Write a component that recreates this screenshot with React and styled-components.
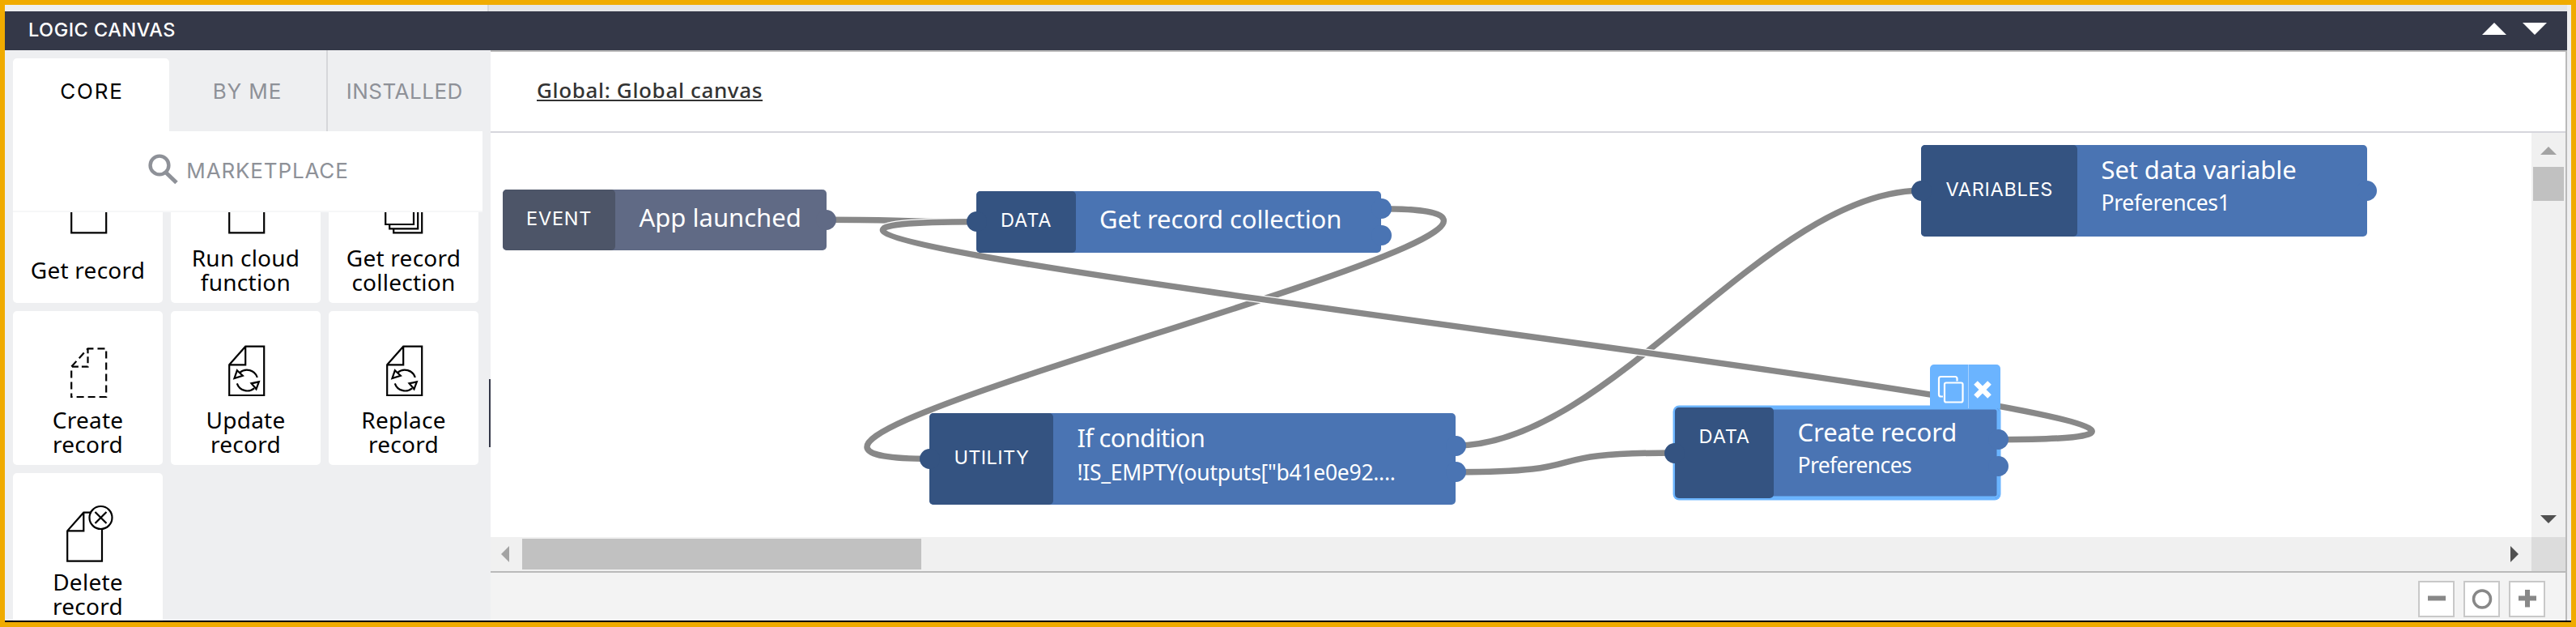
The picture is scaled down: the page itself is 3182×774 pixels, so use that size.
import React from 'react';
import styled, { createGlobalStyle, css } from 'styled-components';

const GlobalStyle = createGlobalStyle`
  *, *::before, *::after { box-sizing: border-box; }
  body { margin: 0; font-family: 'Noto Sans', sans-serif; }
`;

const capsFont = "Inter, 'Noto Sans', sans-serif";

const Frame = styled.div`
  display: flex;
  flex-direction: column;
  width: 3182px;
  height: 774px;
  border: 6px solid #f0ab00;
  background: #efeff0;
  overflow: hidden;
`;

const TopStrip = styled.div`
  display: flex;
  flex: none;
  height: 8px;
  width: 3165px;
  background: #eeeff1;
`;

const TopStripMain = styled.div`
  flex: 1;
  margin-left: 596px;
  border-left: 2px solid #d6d7d9;
  background: #e4e5e7;
`;

const PanelHeader = styled.header`
  display: flex;
  flex: none;
  align-items: center;
  justify-content: space-between;
  width: 3165px;
  height: 48px;
  padding: 0 25px 3px 29px;
  background: #343848;
`;

const PanelTitle = styled.h1`
  margin: 0;
  color: #fff;
  font-family: ${capsFont};
  font-size: 23.5px;
  font-weight: 500;
  letter-spacing: 0.5px;
`;

const HeaderArrows = styled.div`
  display: flex;
  gap: 20px;
  padding-bottom: 2px;

  svg { display: block; fill: #fff; }
`;

const Workspace = styled.main`
  display: flex;
  width: 3165px;
  height: 704px;
  flex: none;
`;

const BottomRule = styled.div`
  flex: none;
  height: 2px;
  background: #000;
`;

const Sidebar = styled.aside`
  display: flex;
  flex-direction: column;
  position: relative;
  width: 600px;
  height: 704px;
  padding-left: 10px;
  background: #eeeff1;
`;

const ResizeHandle = styled.div`
  position: absolute;
  top: 406px;
  right: 0;
  width: 2px;
  height: 84px;
  background: #343848;
`;

const Tabs = styled.nav`
  display: flex;
  flex: none;
  height: 100px;
`;

const Tab = styled.div`
  display: flex;
  align-items: center;
  justify-content: center;
  width: ${(p) => p.$width}px;
  padding-top: 1px;
  padding-right: 2px;
  padding-left: ${(p) => p.$track}px;
  color: #8e9198;
  font-family: ${capsFont};
  font-size: 26px;
  letter-spacing: ${(p) => p.$track}px;
  border-left: ${(p) => (p.$divided ? '2px solid #d6d7da' : '0')};
  ${(p) =>
    p.$active &&
    css`
      height: 90px;
      margin-top: 10px;
      padding-top: 0;
      padding-right: 0;
      padding-bottom: 9px;
      border-radius: 5px 5px 0 0;
      background: #fff;
      color: #000;
    `}
`;

const SearchBar = styled.div`
  display: flex;
  flex: none;
  align-items: center;
  justify-content: center;
  gap: 10px;
  width: 580px;
  height: 100px;
  padding-bottom: 1px;
  padding-left: 2px;
  border-bottom: 2px solid #f6f7f8;
  background: #fff;
  color: #8e9198;
  font-family: ${capsFont};
  font-size: 26px;
  letter-spacing: 0.85px;

  svg { margin-top: -3px; }
`;

const BlockList = styled.div`
  height: 504px;
  overflow: hidden;
`;

const BlockGrid = styled.div`
  display: grid;
  grid-template-columns: repeat(3, 185px);
  grid-auto-rows: 190px;
  gap: 10px;
  margin-top: -78px;
`;

const BlockCard = styled.div`
  display: flex;
  flex-direction: column;
  align-items: center;
  padding-top: 35px;
  border-radius: 5px;
  background: #fff;

  svg { flex: none; fill: none; stroke: #000; stroke-width: 2.2; }
`;

const BlockLabel = styled.div`
  display: flex;
  align-items: center;
  justify-content: center;
  height: 60px;
  margin-top: 4px;
  color: #000;
  font-size: 28px;
  line-height: 30px;
  letter-spacing: 0.25px;
  text-align: center;
  white-space: pre-line;
`;

const Editor = styled.section`
  display: flex;
  flex-direction: column;
  width: 2565px;
  height: 704px;
  border-top: 2px solid #bababa;
  border-right: 2px solid #bababa;
  background: #fff;
`;

const EditorTitleBar = styled.div`
  display: flex;
  flex: none;
  align-items: center;
  height: 100px;
  padding: 0 0 3px 57px;
  border-bottom: 2px solid #d6d6dc;
`;

const CanvasLink = styled.span`
  color: #333;
  border-bottom: 2px solid #333;
  font-size: 26px;
  font-weight: 500;
  line-height: 24px;
  letter-spacing: ${(p) => p.$track}px;
`;

const ScrollGrid = styled.div`
  display: grid;
  flex: none;
  grid-template-columns: 2521px 42px;
  grid-template-rows: 499px 42px;
  border-bottom: 2px solid #bababa;
`;

const Canvas = styled.div`
  position: relative;
  overflow: hidden;
  background: #fff;
`;

const Wires = styled.svg`
  position: absolute;
  inset: 0;
  fill: none;
`;

const Track = styled.div`
  display: flex;
  flex-direction: ${(p) => (p.$vertical ? 'column' : 'row')};
  align-items: center;
  justify-content: space-between;
  padding: ${(p) => (p.$vertical ? '17px 0' : '0 16px 0 13px')};
  background: #f0f0f0;

  svg { display: block; flex: none; }
`;

const Thumb = styled.div`
  width: ${(p) => p.$w}px;
  height: ${(p) => p.$h}px;
  margin: ${(p) => p.$m};
  background: #c1c1c1;
`;

const ScrollCorner = styled.div`
  background: #dcdcdc;
`;

const EditorFooter = styled.footer`
  display: flex;
  flex: 1;
  align-items: flex-start;
  justify-content: flex-end;
  gap: 11px;
  padding: 10px 25px 0 0;
  background: #f3f3f3;
`;

const ZoomButton = styled.button`
  display: flex;
  align-items: center;
  justify-content: center;
  width: 45px;
  height: 45px;
  padding: 0;
  border: 2px solid #c8c8c8;
  background: #fff;

  svg { fill: none; stroke: #888; }
`;

const NodeBox = styled.div`
  position: absolute;
  left: ${(p) => p.$x}px;
  top: ${(p) => p.$y}px;
  display: flex;
  width: ${(p) => p.$w}px;
  height: ${(p) => p.$h}px;
  border-radius: 5px;
  background: ${(p) => p.$tone.body};
  color: #fff;
  box-shadow: ${(p) => (p.$selected ? '0 0 0 2.5px #6bb4ff, inset 0 0 0 2.5px #6bb4ff' : 'none')};
`;

const NodeCategory = styled.div`
  display: flex;
  flex: none;
  align-items: ${(p) => (p.$selected ? 'flex-start' : 'center')};
  justify-content: center;
  width: ${(p) => p.$w}px;
  padding: ${(p) => (p.$selected ? '20px' : 0)} 0 ${(p) => (p.$selected ? 0 : '3px')} ${(p) => p.$track}px;
  border-radius: 5px;
  background: ${(p) => p.$tone.head};
  font-family: ${capsFont};
  font-size: 23.5px;
  line-height: 32px;
  letter-spacing: ${(p) => p.$track}px;
`;

const NodeBody = styled.div`
  display: flex;
  flex-direction: column;
  justify-content: ${(p) => (p.$single ? 'center' : 'flex-start')};
  padding: ${(p) => (p.$single ? '0 0 7px 29.5px' : '10px 0 0 29.5px')};
  white-space: nowrap;
`;

const NodeTitle = styled.div`
  font-size: 31px;
  line-height: 40px;
  letter-spacing: ${(p) => p.$track}px;
`;

const NodeDetail = styled.div`
  padding-top: ${(p) => p.$drop || 1}px;
  font-size: 26.5px;
  line-height: 40px;
  letter-spacing: ${(p) => p.$track}px;
`;

const Port = styled.span`
  position: absolute;
  top: ${(p) => p.$y - 12.5}px;
  ${(p) => p.$side}: -12.5px;
  width: 25px;
  height: 25px;
  border-radius: 50%;
  background: ${(p) => (p.$side === 'left' ? p.$tone.head : p.$tone.body)};
`;

const NodeActions = styled.div`
  position: absolute;
  top: -53px;
  right: -2.5px;
  display: flex;
  width: 87px;
  height: 54px;
  border-radius: 5px 5px 0 0;
  background: #6bb4ff;
`;

const NodeAction = styled.span`
  display: flex;
  align-items: center;
  justify-content: center;
  width: ${(p) => p.$w}px;
  padding: ${(p) => p.$pad};
  border-left: ${(p) => (p.$divided ? '1px solid #a8d2ff' : '0')};

  svg { flex: none; fill: none; stroke: #fff; }
`;

const Triangle = ({ dir, w, h, color }) => {
  const points = {
    up: `0,${h} ${w / 2},0 ${w},${h}`,
    down: `0,0 ${w},0 ${w / 2},${h}`,
    left: `${w},0 0,${h / 2} ${w},${h}`,
    right: `0,0 ${w},${h / 2} 0,${h}`,
  }[dir];
  return (
    <svg width={w} height={h}>
      <polygon points={points} fill={color} />
    </svg>
  );
};

const SearchIcon = () => (
  <svg width="37" height="38" viewBox="0 0 37 38" fill="none" stroke="#8e9198">
    <circle cx="14" cy="14" r="11.4" strokeWidth="4.4" />
    <path d="M22.5 23.5 L35 35.5" strokeWidth="5" />
  </svg>
);

const icons = {
  record: <path d="M11.2 30.6 L31.2 8 H54.2 V68.3 H11.2 Z M11.2 30.6 H31.2 V8" />,
  collection: (
    <>
      <path d="M9.2 30 L25 12 H44 V58 H9.2 Z" />
      <path d="M14.2 59 V63.3 H49.2 V17" />
      <path d="M19.2 64 V68.3 H54.2 V22" />
    </>
  ),
  create: (
    <>
      <path strokeDasharray="9 5" d="M11.2 71 V33.7 L31.5 11.3 H54.2 V71 Z" strokeDashoffset="4.5" />
      <path strokeDasharray="8 4" d="M31.5 11.3 V33.7 H11.2" strokeDashoffset="2" />
    </>
  ),
  update: (
    <>
      <path d="M11.2 31.3 L31.2 8.7 H54.2 V69 H11.2 Z M11.2 31.3 H31.2 V8.7" />
      <path d="M45.8 47 A13.3 13.3 0 0 0 24.2 41" />
      <path d="M20.8 54.3 A13.3 13.3 0 0 0 42 60.3" />
      <path d="M20.8 38.3 L17.5 48 L27.8 44.7 Z M47.8 52.3 L44.5 61.3 L38.5 54.3 Z" />
    </>
  ),
  remove: (
    <>
      <path d="M36 13.7 H26.3 L6.2 36.3 V73.7 H49 V34 M6.2 36.3 H26.3 V13.7" />
      <circle cx="47.5" cy="20" r="14" />
      <path d="M40.5 13 L54.5 27 M54.5 13 L40.5 27" />
    </>
  ),
};

const BlockIcon = ({ name }) => (
  <svg width="64" height="80" viewBox="0 0 64 80">{icons[name]}</svg>
);

const blocks = [
  ['record', 'Get record'],
  ['record', 'Run cloud\nfunction'],
  ['collection', 'Get record\ncollection'],
  ['create', 'Create\nrecord'],
  ['update', 'Update\nrecord'],
  ['update', 'Replace\nrecord'],
  ['remove', 'Delete\nrecord'],
];

const slate = { head: '#4d5568', body: '#606a85' };
const blue = { head: '#345381', body: '#4a74b3' };

const nodes = [
  { id: 'event', x: 14.5, y: 70, w: 400, h: 75, tone: slate, headW: 139.5, category: 'EVENT', track: 0.8, title: 'App launched', titleTrack: 0, outs: [37.3] },
  { id: 'collection', x: 600, y: 72, w: 500, h: 75.7, tone: blue, headW: 122.5, category: 'DATA', track: 0.9, title: 'Get record collection', titleTrack: -0.08, ins: 37.7, outs: [21.7, 54] },
  { id: 'condition', x: 542.4, y: 346, w: 650, h: 113, tone: blue, headW: 152.6, category: 'UTILITY', track: 0.4, title: 'If condition', titleTrack: -0.7, detail: '!IS_EMPTY(outputs["b41e0e92....', detailTrack: -0.28, detailDrop: 2.5, ins: 56.4, outs: [40, 72.7] },
  { id: 'variable', x: 1767, y: 15, w: 550.5, h: 113, tone: blue, headW: 193, category: 'VARIABLES', track: 0.7, title: 'Set data variable', titleTrack: -0.1, detail: 'Preferences1', detailTrack: -0.3, ins: 56.3, outs: [56.3] },
  { id: 'create', x: 1462.6, y: 339, w: 400, h: 112.2, tone: blue, headW: 122.5, category: 'DATA', track: 0.9, title: 'Create record', titleTrack: -0.1, detail: 'Preferences', detailTrack: -0.65, ins: 56, outs: [39.7, 72.3], selected: true },
];

const wires = [
  { from: [414.5, 107.3], to: [600, 109.7], bend: 120 },
  { from: [1100, 93.7], to: [542.4, 402.4], bend: 411 },
  { from: [1192.4, 386], to: [1767, 71.3], bend: 190 },
  { from: [1192.4, 418.7], to: [1462.6, 395], bend: 185 },
  { from: [1862.6, 378.7], to: [600, 109.7], bend: 688 },
];

const Wire = ({ from, to, bend }) => {
  const d = `M${from} C${from[0] + bend},${from[1]} ${to[0] - bend},${to[1]} ${to}`;
  return (
    <>
      <path d={d} stroke="#fff" strokeWidth="10" />
      <path d={d} stroke="#888" strokeWidth="7.5" />
    </>
  );
};

const LogicNode = ({ node: n }) => (
  <NodeBox $x={n.x} $y={n.y} $w={n.w} $h={n.h} $tone={n.tone} $selected={n.selected}>
    <NodeCategory $w={n.headW} $tone={n.tone} $track={n.track} $selected={n.selected}>{n.category}</NodeCategory>
    <NodeBody $single={!n.detail}>
      <NodeTitle $track={n.titleTrack}>{n.title}</NodeTitle>
      {n.detail && <NodeDetail $track={n.detailTrack} $drop={n.detailDrop}>{n.detail}</NodeDetail>}
    </NodeBody>
    {n.selected && (
      <NodeActions>
        <NodeAction $w={47} $pad="8px 0 0 4px">
          <svg width="34" height="36" viewBox="0 0 34 36" strokeWidth="2.2">
            <path d="M7 26.5 H4.5 Q2 26.5 2 24 V4.5 Q2 2 4.5 2 H22 Q24.5 2 24.5 4.5 V7.5" />
            <rect x="9" y="9.5" width="22.5" height="24" rx="2" />
          </svg>
        </NodeAction>
        <NodeAction $w={40} $divided $pad="8px 5px 0 0">
          <svg width="24" height="24" viewBox="0 0 24 24" strokeWidth="6.5">
            <path d="M3.5 3.5 L20.5 20.5 M20.5 3.5 L3.5 20.5" />
          </svg>
        </NodeAction>
      </NodeActions>
    )}
    {n.ins && <Port $side="left" $y={n.ins} $tone={n.tone} />}
    {n.outs.map((y) => (
      <Port key={y} $side="right" $y={y} $tone={n.tone} />
    ))}
  </NodeBox>
);

export default function App() {
  return (
    <Frame>
      <GlobalStyle />
      <TopStrip>
        <TopStripMain />
      </TopStrip>
      <PanelHeader>
        <PanelTitle>LOGIC CANVAS</PanelTitle>
        <HeaderArrows>
          <Triangle dir="up" w={30} h={15} />
          <Triangle dir="down" w={30} h={15} />
        </HeaderArrows>
      </PanelHeader>
      <Workspace>
        <Sidebar>
          <Tabs>
            <Tab $width={193} $track={1.8} $active>CORE</Tab>
            <Tab $width={194} $track={0.9}>BY ME</Tab>
            <Tab $width={193} $track={0.5} $divided>INSTALLED</Tab>
          </Tabs>
          <SearchBar>
            <SearchIcon />
            MARKETPLACE
          </SearchBar>
          <BlockList>
            <BlockGrid>
              {blocks.map(([icon, label]) => (
                <BlockCard key={label}>
                  <BlockIcon name={icon} />
                  <BlockLabel>{label}</BlockLabel>
                </BlockCard>
              ))}
            </BlockGrid>
          </BlockList>
          <ResizeHandle />
        </Sidebar>
        <Editor>
          <EditorTitleBar>
            <CanvasLink $track={0.65}>Global: Global canvas</CanvasLink>
          </EditorTitleBar>
          <ScrollGrid>
            <Canvas>
              <Wires width="2521" height="499">
                {wires.map((w) => (
                  <Wire key={`${w.from}-${w.to}`} {...w} />
                ))}
              </Wires>
              {nodes.map((n) => (
                <LogicNode key={n.id} node={n} />
              ))}
            </Canvas>
            <Track $vertical>
              <Triangle dir="up" w={20} h={10} color="#a3a3a3" />
              <Thumb $w={38} $h={42} $m="15px 0 auto" />
              <Triangle dir="down" w={20} h={10} color="#505050" />
            </Track>
            <Track>
              <Triangle dir="left" w={10} h={20} color="#a3a3a3" />
              <Thumb $w={493} $h={38} $m="0 auto 0 16px" />
              <Triangle dir="right" w={10} h={20} color="#505050" />
            </Track>
            <ScrollCorner />
          </ScrollGrid>
          <EditorFooter>
            <ZoomButton>
              <svg width="24" height="24"><path d="M1 10.5 H23" strokeWidth="6" /></svg>
            </ZoomButton>
            <ZoomButton>
              <svg width="26" height="26"><circle cx="13" cy="12.5" r="10.5" strokeWidth="3.5" /></svg>
            </ZoomButton>
            <ZoomButton>
              <svg width="24" height="24"><path d="M1 10.5 H23 M12 0 V21.5" strokeWidth="6" /></svg>
            </ZoomButton>
          </EditorFooter>
        </Editor>
      </Workspace>
      <BottomRule />
    </Frame>
  );
}
